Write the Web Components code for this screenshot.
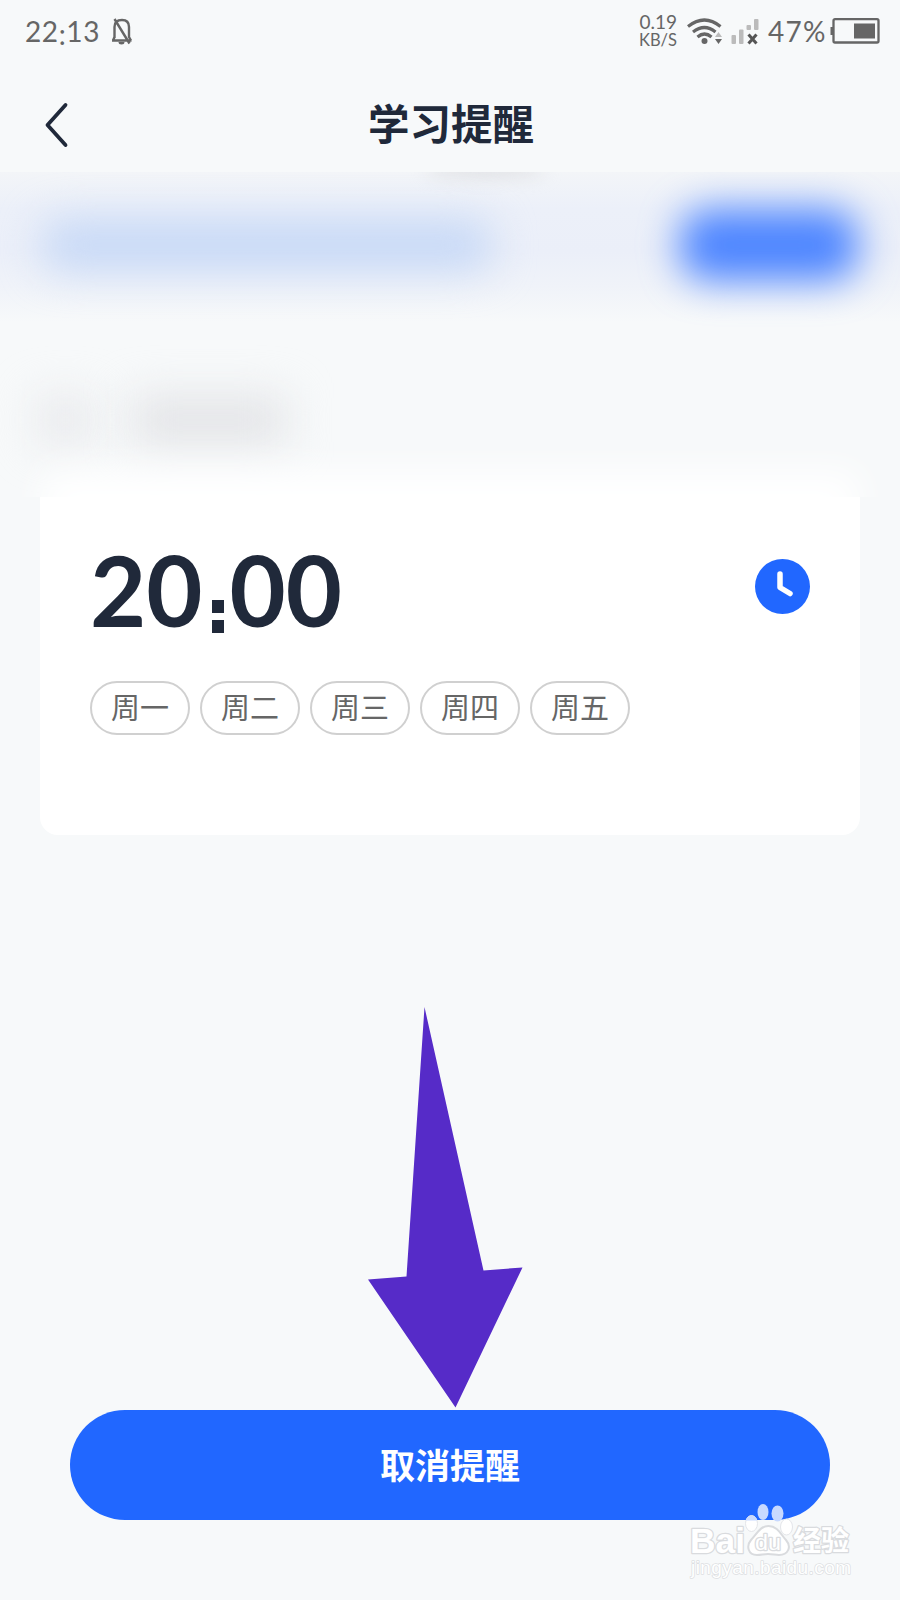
<!DOCTYPE html>
<html lang="zh-CN">
<head>
<meta charset="utf-8">
<title>学习提醒</title>
<style>
  body {
    margin: 0;
    background: #f7f9fa;
    font-family: Lato, "Noto Sans CJK SC", sans-serif;
    color: #20293a;
  }
</style>
</head>
<body>
<reminder-page></reminder-page>

<script>
class BaseElement extends HTMLElement {
  constructor() {
    super();
    this.shadow = this.attachShadow({ mode: "open" });
  }

  connectedCallback() {
    this.shadow.innerHTML = this.render();
  }
}

class StatusBar extends BaseElement {
  render() {
    return `
      <style>
        :host {
          display: flex;
          align-items: center;
          justify-content: space-between;
          box-sizing: border-box;
          height: 64px;
          padding: 0 20px 2px 25px;
          color: #666;
          font-size: 28px;
          line-height: 34px;
        }
        .side { display: flex; align-items: center; }
        .time { width: 75px; letter-spacing: 0.6px; white-space: nowrap; }
        .time span { position: relative; top: 3px; }
        .bell { margin-left: 11px; }
        .speed {
          display: flex;
          flex-direction: column;
          align-items: flex-end;
          margin-right: 10px;
          font-size: 19px;
          line-height: 18px;
        }
        .speed small { font-size: 16.5px; line-height: 18px; }
        .percent { margin-left: 9px; margin-right: 3px; width: 59px; letter-spacing: 1.3px; white-space: nowrap; }
        svg { display: block; }
      </style>
      <div class="side">
        <div class="time">22<span>:</span>13</div>
        <svg class="bell" width="22" height="28" viewBox="0 0 22 28" fill="none" stroke="#666" stroke-width="2.4">
          <path d="M1 23.500H20.500M3.500 21V10C3.500 5 6.500 3 11 3S18 5 18 10V20L20 23.500M3.500 20L2 23.500M3.500 2L18.500 26.500"/>
          <path d="M7.500 25h6a3 2.500 0 0 1-6 0z" fill="#666" stroke="none"/>
        </svg>
      </div>
      <div class="side">
        <div class="speed"><span>0.19</span><small>KB/S</small></div>
        <svg width="36" height="28" viewBox="0 0 36 28" fill="none" stroke="#666" stroke-width="3.200">
          <path d="M1 9.500Q17.500-3.500 33.500 9.500M6 15Q17.500 6 28.500 15M10.500 20Q17.500 14 24.500 20"/>
          <circle cx="17.500" cy="24" r="3" fill="#666" stroke="none"/>
          <path d="M28 20l3.500-5 3.500 5z" fill="#bbb" stroke="none"/>
          <path d="M28 22h7l-3.500 5z" fill="#666" stroke="none"/>
        </svg>
        <svg width="28" height="28" viewBox="0 0 28 28" style="margin-left: 8px">
          <g fill="#bbb">
            <rect x="0.500" y="18" width="4.500" height="9" rx="1"/>
            <rect x="8" y="12.500" width="4.500" height="14.500" rx="1"/>
            <rect x="15.500" y="8" width="4.500" height="5" rx="1"/>
            <rect x="23" y="2" width="4.500" height="11" rx="1"/>
          </g>
          <path d="M17.500 17.500l8 9M25.500 17.500L17.500 26.500" stroke="#555" stroke-width="3"/>
        </svg>
        <div class="percent">47%</div>
        <svg width="50" height="26" viewBox="0 0 50 26">
          <rect x="3.500" y="1.200" width="45" height="23.300" rx="1.500" fill="none" stroke="#666" stroke-width="2.300"/>
          <path d="M3 9H0.500V17H3z" fill="#666"/>
          <rect x="24" y="5.500" width="21" height="15" fill="#666"/>
        </svg>
      </div>
    `;
  }
}

class NavHeader extends BaseElement {
  render() {
    return `
      <style>
        :host {
          display: grid;
          grid-template-columns: 44px 1fr 44px;
          align-items: center;
          box-sizing: border-box;
          height: 108px;
          padding: 0 36px 0 34px;
        }
        h1 {
          margin: 0;
          font-size: 41.500px;
          font-weight: 700;
          line-height: 60px;
          text-align: center;
          padding: 12px 0 0 4px;
        }
        svg { display: block; margin-left: 10px; margin-top: 13px; }
      </style>
      <svg width="28" height="46" viewBox="0 0 28 46" fill="none" stroke="#20293a" stroke-width="3.800" stroke-linecap="round" stroke-linejoin="round">
        <path d="M21.500 3L3.500 23L21.500 43"/>
      </svg>
      <h1><slot></slot></h1>
    `;
  }
}

class BlurredPanel extends BaseElement {
  render() {
    return `
      <style>
        :host {
          display: flex;
          flex-direction: column;
          height: 325px;
          overflow: hidden;
        }
        .band, .caption, .glow, .shade { flex: none; }
        .band {
          display: flex;
          align-items: center;
          justify-content: space-between;
          box-sizing: border-box;
          height: 150px;
          padding: 0 42px 4px;
          background: linear-gradient(#f3f5f8, #ecf0f9 36px, #ebeff9 80px, #f0f3f9 115px, #f7f9fa);
        }
        .line { width: 450px; height: 50px; border-radius: 20px; background: #c6d8f6; filter: blur(20px); }
        .action { width: 178px; height: 72px; border-radius: 28px; background: #4d85ff; filter: blur(19px); }
        .caption { display: flex; gap: 38px; margin: 75px 0 0 38px; }
        .caption i { height: 46px; width: 55px; background: #e7e8eb; filter: blur(22px); }
        .caption i + i { width: 155px; background: #e2e3e6; }
        .glow { height: 100px; margin: 29px 42px 0; background: #fff; filter: blur(18px); }
        .shade { align-self: center; width: 120px; height: 10px; margin: -7px 0 -3px 70px; border-radius: 50%; background: #d4d5d9; filter: blur(9px); z-index: 1; }
      </style>
      <div class="shade"></div>
      <div class="band"><div class="line"></div><div class="action"></div></div>
      <div class="caption"><i></i><i></i></div>
      <div class="glow"></div>
    `;
  }
}

class DayChip extends BaseElement {
  render() {
    return `
      <style>
        :host {
          display: flex;
          align-items: center;
          justify-content: center;
          box-sizing: border-box;
          width: 100px;
          height: 54px;
          border: 2px solid #d0d0d0;
          border-radius: 27px;
          color: #666;
          font-size: 29px;
          line-height: 40px;
        }
      </style>
      <slot></slot>
    `;
  }
}

class ReminderCard extends BaseElement {
  render() {
    return `
      <style>
        :host {
          display: block;
          box-sizing: border-box;
          height: 338px;
          margin: 0 40px;
          padding: 34px 50px 0;
          background: #fff;
          border-radius: 0 0 18px 18px;
        }
        .top { display: flex; justify-content: space-between; height: 120px; }
        .time { font-size: 97px; font-weight: 700; line-height: 117px; white-space: nowrap; }
        /* the colon of this clock face sits low, with square dots */
        .colon {
          display: inline-block;
          width: 27px;
          color: transparent;
          background:
            linear-gradient(#20293a, #20293a) 9px 69px / 12px 13px no-repeat,
            linear-gradient(#20293a, #20293a) 9px 89px / 12px 13px no-repeat;
        }
        .clock { margin-top: 28px; }
        .days { display: flex; gap: 10px; margin-top: 30px; }
      </style>
      <div class="top">
        <div class="time">20<span class="colon">:</span>00</div>
        <svg class="clock" width="55" height="55" viewBox="0 0 55 55">
          <circle cx="27.500" cy="27.500" r="27.500" fill="#2167ff"/>
          <path d="M25 15V28.500L35 34.500" fill="none" stroke="#fff" stroke-width="5.500" stroke-linecap="round" stroke-linejoin="round"/>
        </svg>
      </div>
      <div class="days"><slot></slot></div>
    `;
  }
}

class CancelButton extends BaseElement {
  render() {
    return `
      <style>
        :host { display: block; margin: 575px 70px 0; }
        button {
          display: block;
          width: 100%;
          height: 110px;
          padding: 0 0 4px;
          border: 0;
          border-radius: 55px;
          background: #2167ff;
          color: #fff;
          font: 700 35px "Noto Sans CJK SC", sans-serif;
        }
      </style>
      <button><slot></slot></button>
    `;
  }
}

class PointerArrow extends BaseElement {
  render() {
    return `
      <style>
        :host { position: absolute; left: 368px; top: 1007px; }
        svg { display: block; }
      </style>
      <svg width="155" height="401" viewBox="0 0 155 401">
        <path d="M56.500 0L115.500 263.500L154.500 260.500L87.500 400.500L0 272.500L38.500 269.500z" fill="#562bc8"/>
      </svg>
    `;
  }
}

class SiteWatermark extends BaseElement {
  render() {
    return `
      <style>
        :host { position: absolute; left: 680px; top: 1495px; }
        svg { display: block; }
        text { paint-order: stroke; stroke-linejoin: round; }
      </style>
      <svg width="190" height="95" viewBox="0 0 190 95" fill="#fff" stroke="#d9dbde" stroke-width="2.500">
        <text x="10" y="58" font-family="Liberation Sans, sans-serif" font-size="35" font-weight="700" textLength="55" lengthAdjust="spacingAndGlyphs">Bai</text>
        <g stroke="#e3e5e9" stroke-width="1">
          <path d="M88.500 31C98 31 101 40 106 45C112 52 108 60 99 60C95 60 93 59 88 59C84 59 81 60 77 60C68 60 66 51 71 45C77 39 80 31 88.500 31z" stroke="#d9dbde" stroke-width="2"/>
          <ellipse cx="71.500" cy="28.500" rx="6" ry="8"/>
          <ellipse cx="106.500" cy="32" rx="6" ry="8"/>
        </g>
        <g fill="#c8d9ff" stroke="none">
          <ellipse cx="83" cy="17" rx="5.500" ry="8"/>
          <ellipse cx="97.500" cy="18.500" rx="6" ry="8"/>
          <path d="M66 25.500C67 19 76 19 77 25.500z"/>
        </g>
        <text x="75" y="55" font-family="Liberation Sans, sans-serif" font-size="22" textLength="26" lengthAdjust="spacingAndGlyphs">du</text>
        <text x="113" y="56" font-family="Noto Sans CJK SC, sans-serif" font-size="28" font-weight="700" textLength="56">经验</text>
        <text x="11" y="79" font-family="Liberation Sans, sans-serif" font-size="19" stroke-width="1.500" stroke="#dddfe2" textLength="160">jingyan.baidu.com</text>
      </svg>
    `;
  }
}

class ReminderPage extends BaseElement {
  render() {
    return `
      <style>
        :host {
          display: block;
          position: relative;
          width: 900px;
          height: 1600px;
          overflow: hidden;
        }
      </style>
      <status-bar></status-bar>
      <nav-header>学习提醒</nav-header>
      <blurred-panel></blurred-panel>
      <reminder-card>
        <day-chip>周一</day-chip>
        <day-chip>周二</day-chip>
        <day-chip>周三</day-chip>
        <day-chip>周四</day-chip>
        <day-chip>周五</day-chip>
      </reminder-card>
      <cancel-button>取消提醒</cancel-button>
      <pointer-arrow></pointer-arrow>
      <site-watermark></site-watermark>
    `;
  }
}

customElements.define("status-bar", StatusBar);
customElements.define("nav-header", NavHeader);
customElements.define("blurred-panel", BlurredPanel);
customElements.define("day-chip", DayChip);
customElements.define("reminder-card", ReminderCard);
customElements.define("cancel-button", CancelButton);
customElements.define("pointer-arrow", PointerArrow);
customElements.define("site-watermark", SiteWatermark);
customElements.define("reminder-page", ReminderPage);
</script>
</body>
</html>
